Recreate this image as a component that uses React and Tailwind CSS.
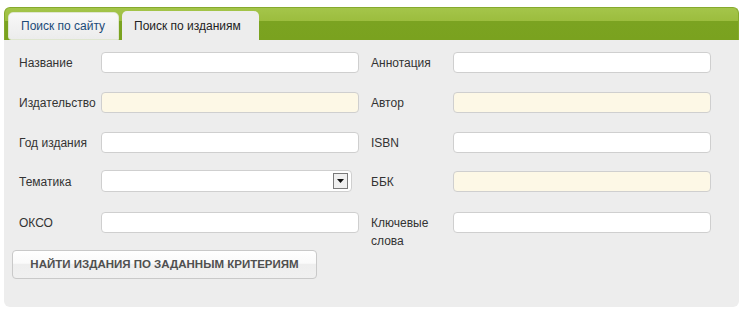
import React from "react";

const font = { fontFamily: '"Liberation Sans", Arial, sans-serif' };

function Input({ yellow }) {
  return (
    <div
      className={`h-[21px] w-[258px] rounded-[4px] border border-[#cfcfcf] ${
        yellow ? "bg-[#fdf8e6]" : "bg-white"
      }`}
    />
  );
}

function Select() {
  return (
    <div className="mt-[-1px] flex h-[22px] w-[251px] items-center justify-end rounded-[4px] border border-[#cfcfcf] bg-white pr-[3px]">
      <div className="flex h-[16px] w-[15px] items-center justify-center border border-[#7a7a7a] bg-[#f0f0f0]">
        <svg width="7" height="4" viewBox="0 0 7 4">
          <path d="M0 0 L7 0 L3.5 4 Z" fill="#111" />
        </svg>
      </div>
    </div>
  );
}

function Label({ children }) {
  return <div className="w-[82px] pt-[2px] text-[12px] leading-[18px] text-[#333]">{children}</div>;
}

function Row({ l1, f1, l2, f2, h }) {
  return (
    <div className={`flex ${h}`}>
      <Label>{l1}</Label>
      {f1}
      <div className="w-[12px]" />
      <Label>{l2}</Label>
      {f2}
    </div>
  );
}

export default function App() {
  return (
    <div className="h-[313px] w-[744px] bg-white" style={font}>
      <div className="ml-[4px] w-[735px] pt-[7px]">
        <div className="flex h-[33px] items-end gap-[3px] rounded-t-[6px] border border-b-0 border-[#86aa2c] bg-[linear-gradient(#a4c54a_0%,#9cbd3e_40%,#7ba321_42%,#7aa21f_100%)] pl-[3px]">
          <div className="flex h-[28px] w-[111px] items-center rounded-t-[5px] rounded-bl-[3px] border border-[#dfe6d0] bg-[linear-gradient(#f8f8f8,#ececec)] pl-[12px] text-[12px] text-[#1b4a78]">
            Поиск по сайту
          </div>
          <div className="flex h-[29px] w-[137px] items-center rounded-t-[5px] bg-[#ededed] pl-[12px] text-[12px] text-[#222]">
            Поиск по изданиям
          </div>
        </div>
        <div className="rounded-b-[6px] bg-[#ededed] pb-[28px] pl-[15px] pt-[12px]">
          <Row h="h-[40px]" l1="Название" f1={<Input />} l2="Аннотация" f2={<Input />} />
          <Row h="h-[40px]" l1="Издательство" f1={<Input yellow />} l2="Автор" f2={<Input yellow />} />
          <Row h="h-[39px]" l1="Год издания" f1={<Input />} l2="ISBN" f2={<Input />} />
          <Row
            h="h-[41px]"
            l1="Тематика"
            f1={
              <div className="flex w-[258px]">
                <Select />
              </div>
            }
            l2="ББК"
            f2={<Input yellow />}
          />
          <Row h="h-[38px]" l1="ОКСО" f1={<Input />} l2="Ключевые слова" f2={<Input />} />
          <div className="ml-[-7px] flex h-[29px] w-[305px] items-center justify-center rounded-[4px] border border-[#c9c9c9] bg-[linear-gradient(#ffffff_0%,#fafafa_45%,#eeeeee_50%,#f0f0f0_100%)] text-[11.5px] font-bold text-[#505050]">
            НАЙТИ ИЗДАНИЯ ПО ЗАДАННЫМ КРИТЕРИЯМ
          </div>
        </div>
      </div>
    </div>
  );
}
